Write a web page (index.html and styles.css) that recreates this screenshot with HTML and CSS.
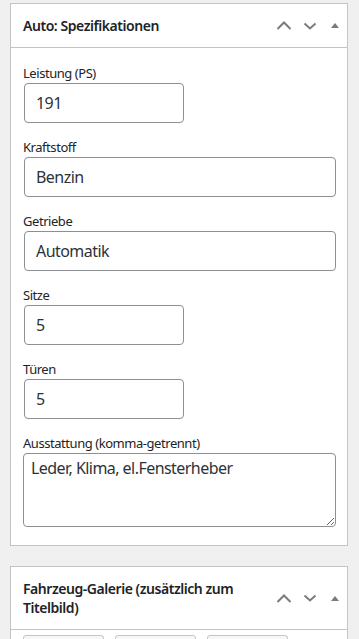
FILE: index.html
```html
<!DOCTYPE html>
<html lang="de">

<head>
    <meta charset="UTF-8">
    <meta name="viewport" content="width=device-width, initial-scale=1.0">
    <title>Auto: Spezifikationen</title>
    <link rel="stylesheet" href="styles.css">
</head>

<body>
    <div class="postbox">
        <div class="postbox-header">
            <h2>Auto: Spezifikationen</h2>
            <div class="handle-actions">
                <span class="handle up"><svg width="16" height="9" viewBox="0 0 16 9"><polyline points="1.5,8 8,1.5 14.5,8" /></svg></span>
                <span class="handle down"><svg width="14" height="8" viewBox="0 0 14 8"><polyline points="1.5,1.5 7,6.5 12.5,1.5" /></svg></span>
                <span class="handle toggle"><svg width="8" height="5" viewBox="0 0 8 5"><polygon points="0,5 4,0 8,5" /></svg></span>
            </div>
        </div>
        <div class="inside">
            <div class="field">
                <label>Leistung (PS)</label>
                <input type="text" class="small" value="191">
            </div>
            <div class="field">
                <label>Kraftstoff</label>
                <input type="text" class="wide" value="Benzin">
            </div>
            <div class="field">
                <label>Getriebe</label>
                <input type="text" class="wide" value="Automatik">
            </div>
            <div class="field">
                <label>Sitze</label>
                <input type="text" class="small" value="5">
            </div>
            <div class="field">
                <label>Türen</label>
                <input type="text" class="small" value="5">
            </div>
            <div class="field last">
                <label>Ausstattung (komma-getrennt)</label>
                <textarea>Leder, Klima, el.Fensterheber</textarea>
            </div>
        </div>
    </div>

    <div class="postbox">
        <div class="postbox-header">
            <h2>Fahrzeug-Galerie (zusätzlich zum Titelbild)</h2>
            <div class="handle-actions">
                <span class="handle up"><svg width="16" height="9" viewBox="0 0 16 9"><polyline points="1.5,8 8,1.5 14.5,8" /></svg></span>
                <span class="handle down"><svg width="14" height="8" viewBox="0 0 14 8"><polyline points="1.5,1.5 7,6.5 12.5,1.5" /></svg></span>
                <span class="handle toggle"><svg width="8" height="5" viewBox="0 0 8 5"><polygon points="0,5 4,0 8,5" /></svg></span>
            </div>
        </div>
        <div class="inside gallery">
            <span class="gallery-btn"></span>
            <span class="gallery-btn"></span>
            <span class="gallery-btn"></span>
        </div>
    </div>
</body>

</html>
```

FILE: styles.css
```css
* {
    margin: 0;
    padding: 0;
    box-sizing: border-box;
}

body {
    background-color: #f0f0f1;
    padding: 3px 11px 0 10px;
    font-family: "Noto Sans", "Open Sans", sans-serif;
    color: #1d2327;
}

.postbox {
    background-color: #fff;
    border: 1px solid #c3c4c7;
    margin-bottom: 20px;
}

.postbox-header {
    display: flex;
    align-items: center;
    border-bottom: 1px solid #c3c4c7;
}

.postbox-header h2 {
    flex: 1;
    padding: 12px 12px;
    font-size: 14px;
    line-height: 19px;
    font-weight: 600;
    letter-spacing: -0.45px;
}

.handle-actions {
    display: flex;
    align-items: center;
}

.handle {
    display: flex;
    justify-content: center;
    align-items: center;
    width: 26px;
    height: 30px;
}

.handle.toggle {
    width: 24px;
}

.handle polyline {
    fill: none;
    stroke: #787c82;
    stroke-width: 2;
}

.handle polygon {
    fill: #787c82;
}

.inside {
    padding: 16px 12px 18px;
}

.field {
    margin-bottom: 15px;
}

.field.last {
    margin-bottom: 0;
}

.field label {
    display: block;
    font-size: 13px;
    line-height: 18px;
    margin-bottom: 1px;
    letter-spacing: -0.45px;
}

.field input,
.field textarea {
    display: block;
    height: 40px;
    border: 1px solid #8c8f94;
    border-radius: 4px;
    padding: 0 11px;
    font-family: "Noto Sans", "Open Sans", sans-serif;
    font-size: 16px;
    letter-spacing: -0.55px;
    color: #2c3338;
    background-color: #fff;
}

.field input.small {
    width: 160px;
    margin-left: 1px;
}

.field input.wide {
    width: 312px;
    margin-left: 1px;
}

.field textarea {
    width: 313px;
    height: 74px;
    padding: 2px 7px;
    line-height: 24px;
    resize: vertical;
}

.gallery {
    display: flex;
    gap: 11px;
    padding: 5px 12px 40px;
}

.gallery-btn {
    width: 81px;
    height: 32px;
    border: 1px solid #c3c4c7;
    border-radius: 3px;
    background-color: #f6f7f7;
}
```
